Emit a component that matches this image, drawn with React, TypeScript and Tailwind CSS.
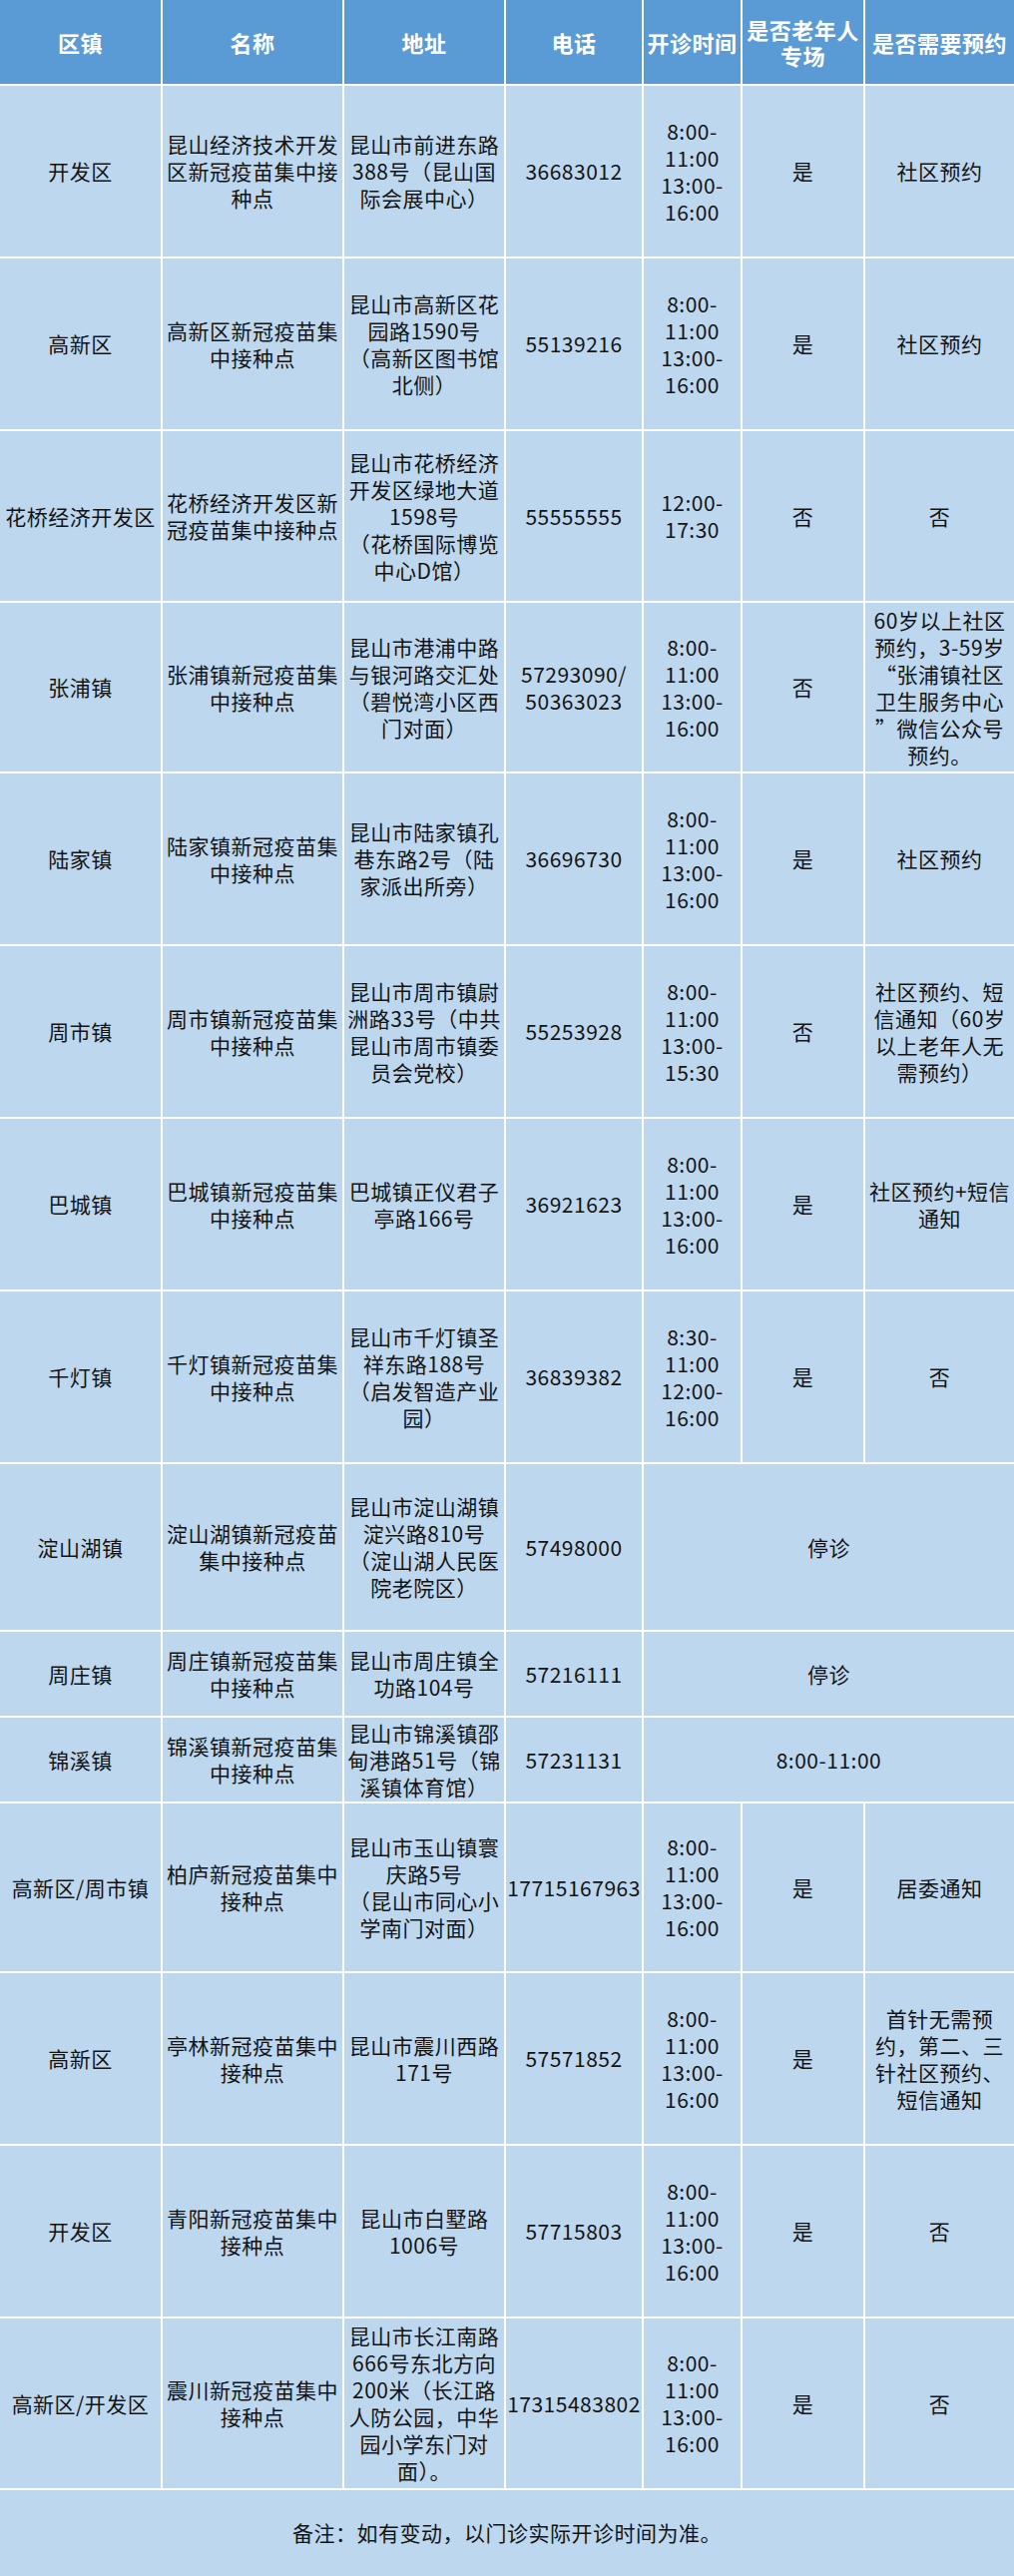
import React from "react";

type Row = {
  height: string;
  cells: string[];
  merged?: string;
};

const cols = "grid grid-cols-[161px_180px_160px_136px_97px_121px_149px] gap-x-[2px]";

const times = "8:00-\n11:00\n13:00-\n16:00";

const rows: Row[] = [
  {
    height: "h-[171px]",
    cells: ["开发区", "昆山经济技术开发\n区新冠疫苗集中接\n种点", "昆山市前进东路\n388号（昆山国\n际会展中心）", "36683012", times, "是", "社区预约"],
  },
  {
    height: "h-[171px]",
    cells: ["高新区", "高新区新冠疫苗集\n中接种点", "昆山市高新区花\n园路1590号\n（高新区图书馆\n北侧）", "55139216", times, "是", "社区预约"],
  },
  {
    height: "h-[170px]",
    cells: ["花桥经济开发区", "花桥经济开发区新\n冠疫苗集中接种点", "昆山市花桥经济\n开发区绿地大道\n1598号\n（花桥国际博览\n中心D馆）", "55555555", "12:00-\n17:30", "否", "否"],
  },
  {
    height: "h-[169px]",
    cells: [
      "张浦镇",
      "张浦镇新冠疫苗集\n中接种点",
      "昆山市港浦中路\n与银河路交汇处\n（碧悦湾小区西\n门对面）",
      "57293090/\n50363023",
      times,
      "否",
      "60岁以上社区\n预约，3-59岁\n“张浦镇社区\n卫生服务中心\n”微信公众号\n预约。",
    ],
  },
  {
    height: "h-[171px]",
    cells: ["陆家镇", "陆家镇新冠疫苗集\n中接种点", "昆山市陆家镇孔\n巷东路2号（陆\n家派出所旁）", "36696730", times, "是", "社区预约"],
  },
  {
    height: "h-[171px]",
    cells: [
      "周市镇",
      "周市镇新冠疫苗集\n中接种点",
      "昆山市周市镇尉\n洲路33号（中共\n昆山市周市镇委\n员会党校）",
      "55253928",
      "8:00-\n11:00\n13:00-\n15:30",
      "否",
      "社区预约、短\n信通知（60岁\n以上老年人无\n需预约）",
    ],
  },
  {
    height: "h-[171px]",
    cells: ["巴城镇", "巴城镇新冠疫苗集\n中接种点", "巴城镇正仪君子\n亭路166号", "36921623", times, "是", "社区预约+短信\n通知"],
  },
  {
    height: "h-[171px]",
    cells: ["千灯镇", "千灯镇新冠疫苗集\n中接种点", "昆山市千灯镇圣\n祥东路188号\n（启发智造产业\n园）", "36839382", "8:30-\n11:00\n12:00-\n16:00", "是", "否"],
  },
  {
    height: "h-[166px]",
    cells: ["淀山湖镇", "淀山湖镇新冠疫苗\n集中接种点", "昆山市淀山湖镇\n淀兴路810号\n（淀山湖人民医\n院老院区）", "57498000"],
    merged: "停诊",
  },
  {
    height: "h-[84px]",
    cells: ["周庄镇", "周庄镇新冠疫苗集\n中接种点", "昆山市周庄镇全\n功路104号", "57216111"],
    merged: "停诊",
  },
  {
    height: "h-[84px]",
    cells: ["锦溪镇", "锦溪镇新冠疫苗集\n中接种点", "昆山市锦溪镇邵\n甸港路51号（锦\n溪镇体育馆）", "57231131"],
    merged: "8:00-11:00",
  },
  {
    height: "h-[168px]",
    cells: ["高新区/周市镇", "柏庐新冠疫苗集中\n接种点", "昆山市玉山镇寰\n庆路5号\n（昆山市同心小\n学南门对面）", "17715167963", times, "是", "居委通知"],
  },
  {
    height: "h-[171px]",
    cells: ["高新区", "亭林新冠疫苗集中\n接种点", "昆山市震川西路\n171号", "57571852", times, "是", "首针无需预\n约，第二、三\n针社区预约、\n短信通知"],
  },
  {
    height: "h-[171px]",
    cells: ["开发区", "青阳新冠疫苗集中\n接种点", "昆山市白墅路\n1006号", "57715803", times, "是", "否"],
  },
  {
    height: "h-[170px]",
    cells: [
      "高新区/开发区",
      "震川新冠疫苗集中\n接种点",
      "昆山市长江南路\n666号东北方向\n200米（长江路\n人防公园，中华\n园小学东门对\n面）。",
      "17315483802",
      times,
      "是",
      "否",
    ],
  },
];

const headers = ["区镇", "名称", "地址", "电话", "开诊时间", "是否老年人\n专场", "是否需要预约"];

function Cell({ text, className = "" }: { text: string; className?: string }) {
  return (
    <div
      className={`flex items-center justify-center overflow-hidden bg-[#bdd7ee] text-center whitespace-pre leading-[27px] ${className}`}
    >
      {text}
    </div>
  );
}

export default function App() {
  return (
    <div
      className="flex w-[1016px] flex-col gap-y-[2px] bg-white text-[21px] tracking-[0.5px] text-[#141414]"
      style={{ fontFamily: '"Noto Sans CJK SC", "Noto Sans", sans-serif' }}
    >
      <div className={`${cols} h-[84px]`}>
        {headers.map((h) => (
          <div
            key={h}
            className="flex items-center justify-center bg-[#5b9bd5] text-center text-[22px] font-bold leading-[26px] whitespace-pre text-white"
          >
            {h}
          </div>
        ))}
      </div>

      {rows.map((row, i) => (
        <div key={i} className={`${cols} ${row.height}`}>
          {row.cells.map((c, j) => (
            <Cell key={j} text={c} />
          ))}
          {row.merged ? <Cell text={row.merged} className="col-span-3" /> : null}
        </div>
      ))}

      <div className="flex h-[86px] items-center justify-center bg-[#bdd7ee] text-center">
        备注：如有变动，以门诊实际开诊时间为准。
      </div>
    </div>
  );
}
